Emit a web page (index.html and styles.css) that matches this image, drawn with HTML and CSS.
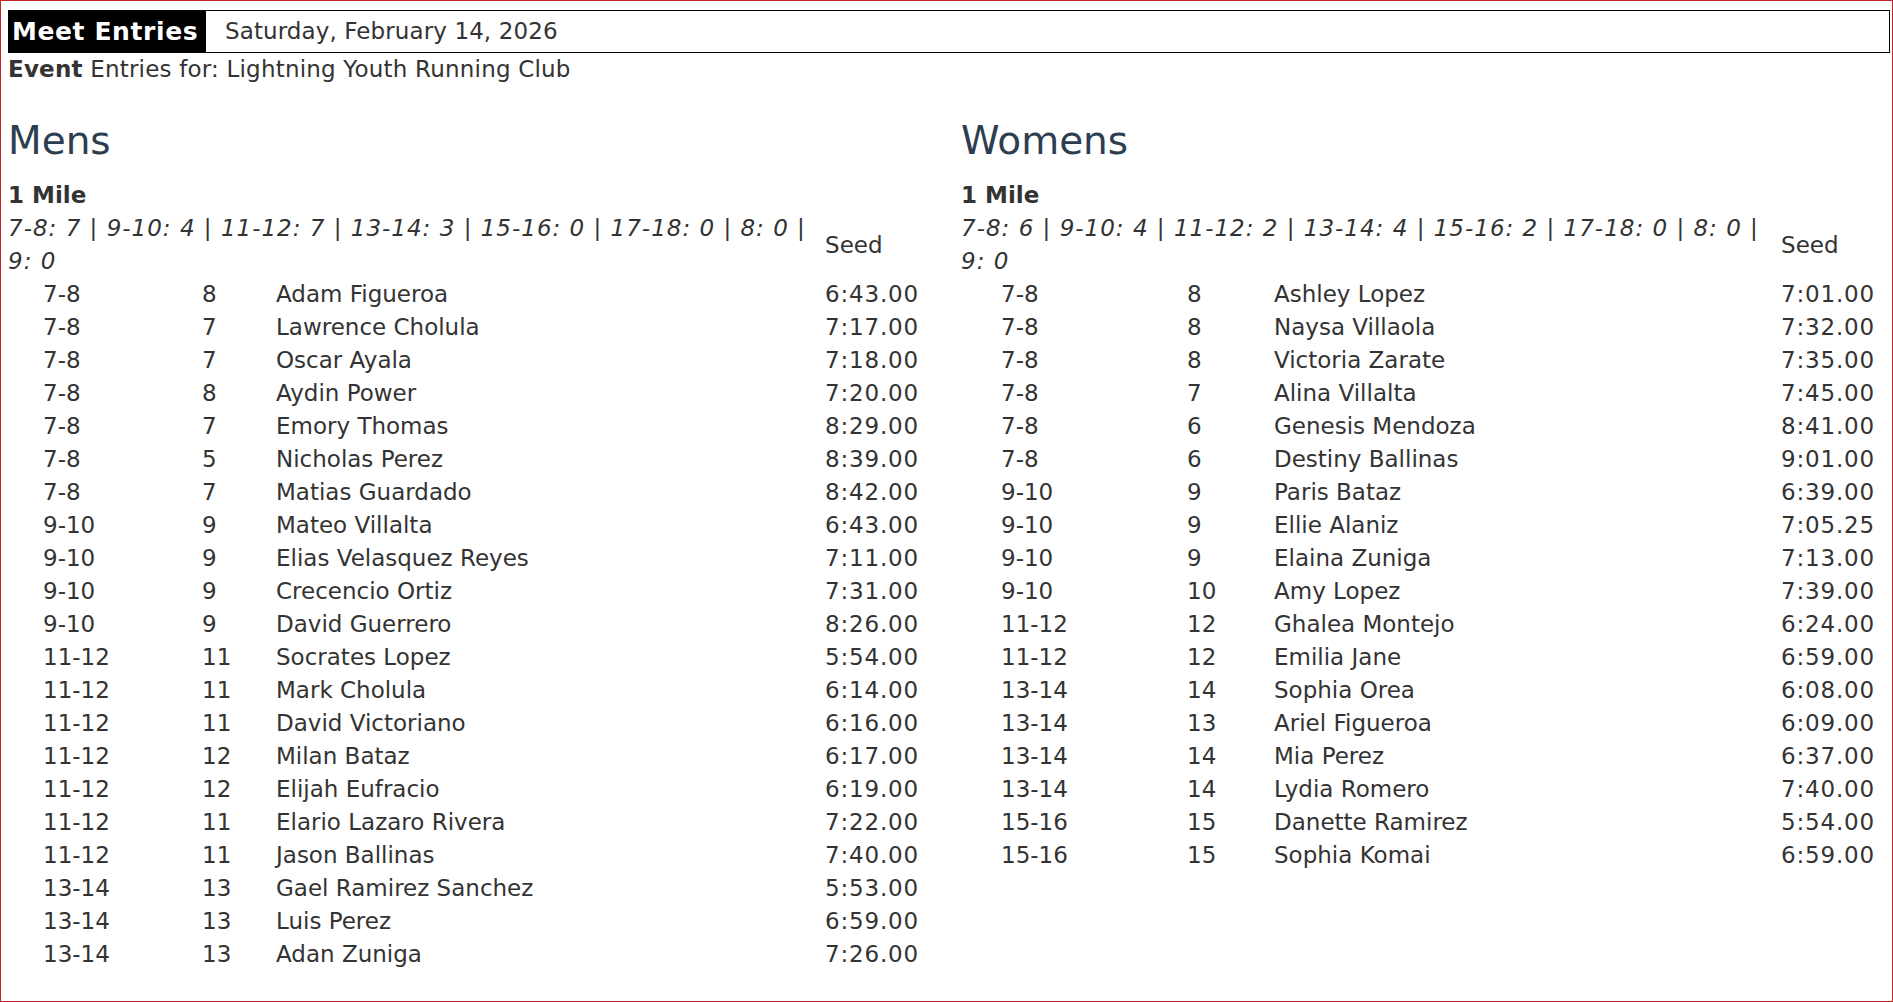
FILE: index.html
```html
<!DOCTYPE html>
<html>
<head>
<meta charset="utf-8">
<title>Meet Entries</title>
<link rel="stylesheet" href="styles.css">
</head>
<body>
<div class="frame">
  <div class="titlebar">
    <div class="label">Meet Entries</div>
    <div class="date">Saturday, February 14, 2026</div>
  </div>
  <div class="club"><b>Event</b> Entries for: Lightning Youth Running Club</div>

  <div class="columns">
    <section class="side mens">
      <h3>Mens</h3>
      <div class="event">1 Mile</div>
      <table class="entries">
        <colgroup><col class="c1"><col class="c2"><col class="c3"><col class="c4"></colgroup>
        <thead>
          <tr>
            <th colspan="3" class="summary">7-8: 7 | 9-10: 4 | 11-12: 7 | 13-14: 3 | 15-16: 0 | 17-18: 0 | 8: 0 | 9: 0</th>
            <th class="seedh">Seed</th>
          </tr>
        </thead>
        <tbody>
          <tr><td>7-8</td><td>8</td><td>Adam Figueroa</td><td>6:43.00</td></tr>
          <tr><td>7-8</td><td>7</td><td>Lawrence Cholula</td><td>7:17.00</td></tr>
          <tr><td>7-8</td><td>7</td><td>Oscar Ayala</td><td>7:18.00</td></tr>
          <tr><td>7-8</td><td>8</td><td>Aydin Power</td><td>7:20.00</td></tr>
          <tr><td>7-8</td><td>7</td><td>Emory Thomas</td><td>8:29.00</td></tr>
          <tr><td>7-8</td><td>5</td><td>Nicholas Perez</td><td>8:39.00</td></tr>
          <tr><td>7-8</td><td>7</td><td>Matias Guardado</td><td>8:42.00</td></tr>
          <tr><td>9-10</td><td>9</td><td>Mateo Villalta</td><td>6:43.00</td></tr>
          <tr><td>9-10</td><td>9</td><td>Elias Velasquez Reyes</td><td>7:11.00</td></tr>
          <tr><td>9-10</td><td>9</td><td>Crecencio Ortiz</td><td>7:31.00</td></tr>
          <tr><td>9-10</td><td>9</td><td>David Guerrero</td><td>8:26.00</td></tr>
          <tr><td>11-12</td><td>11</td><td>Socrates Lopez</td><td>5:54.00</td></tr>
          <tr><td>11-12</td><td>11</td><td>Mark Cholula</td><td>6:14.00</td></tr>
          <tr><td>11-12</td><td>11</td><td>David Victoriano</td><td>6:16.00</td></tr>
          <tr><td>11-12</td><td>12</td><td>Milan Bataz</td><td>6:17.00</td></tr>
          <tr><td>11-12</td><td>12</td><td>Elijah Eufracio</td><td>6:19.00</td></tr>
          <tr><td>11-12</td><td>11</td><td>Elario Lazaro Rivera</td><td>7:22.00</td></tr>
          <tr><td>11-12</td><td>11</td><td>Jason Ballinas</td><td>7:40.00</td></tr>
          <tr><td>13-14</td><td>13</td><td>Gael Ramirez Sanchez</td><td>5:53.00</td></tr>
          <tr><td>13-14</td><td>13</td><td>Luis Perez</td><td>6:59.00</td></tr>
          <tr><td>13-14</td><td>13</td><td>Adan Zuniga</td><td>7:26.00</td></tr>
        </tbody>
      </table>
    </section>

    <section class="side womens">
      <h3>Womens</h3>
      <div class="event">1 Mile</div>
      <table class="entries">
        <colgroup><col class="c1"><col class="c2"><col class="c3"><col class="c4"></colgroup>
        <thead>
          <tr>
            <th colspan="3" class="summary">7-8: 6 | 9-10: 4 | 11-12: 2 | 13-14: 4 | 15-16: 2 | 17-18: 0 | 8: 0 | 9: 0</th>
            <th class="seedh">Seed</th>
          </tr>
        </thead>
        <tbody>
          <tr><td>7-8</td><td>8</td><td>Ashley Lopez</td><td>7:01.00</td></tr>
          <tr><td>7-8</td><td>8</td><td>Naysa Villaola</td><td>7:32.00</td></tr>
          <tr><td>7-8</td><td>8</td><td>Victoria Zarate</td><td>7:35.00</td></tr>
          <tr><td>7-8</td><td>7</td><td>Alina Villalta</td><td>7:45.00</td></tr>
          <tr><td>7-8</td><td>6</td><td>Genesis Mendoza</td><td>8:41.00</td></tr>
          <tr><td>7-8</td><td>6</td><td>Destiny Ballinas</td><td>9:01.00</td></tr>
          <tr><td>9-10</td><td>9</td><td>Paris Bataz</td><td>6:39.00</td></tr>
          <tr><td>9-10</td><td>9</td><td>Ellie Alaniz</td><td>7:05.25</td></tr>
          <tr><td>9-10</td><td>9</td><td>Elaina Zuniga</td><td>7:13.00</td></tr>
          <tr><td>9-10</td><td>10</td><td>Amy Lopez</td><td>7:39.00</td></tr>
          <tr><td>11-12</td><td>12</td><td>Ghalea Montejo</td><td>6:24.00</td></tr>
          <tr><td>11-12</td><td>12</td><td>Emilia Jane</td><td>6:59.00</td></tr>
          <tr><td>13-14</td><td>14</td><td>Sophia Orea</td><td>6:08.00</td></tr>
          <tr><td>13-14</td><td>13</td><td>Ariel Figueroa</td><td>6:09.00</td></tr>
          <tr><td>13-14</td><td>14</td><td>Mia Perez</td><td>6:37.00</td></tr>
          <tr><td>13-14</td><td>14</td><td>Lydia Romero</td><td>7:40.00</td></tr>
          <tr><td>15-16</td><td>15</td><td>Danette Ramirez</td><td>5:54.00</td></tr>
          <tr><td>15-16</td><td>15</td><td>Sophia Komai</td><td>6:59.00</td></tr>
        </tbody>
      </table>
    </section>
  </div>
</div>
</body>
</html>
```
FILE: styles.css
```css
html, body {
  margin: 0;
  padding: 0;
  background: #fff;
}

body {
  font-family: "DejaVu Sans", Verdana, sans-serif;
  font-size: 23px;
  line-height: 33px;
  color: #333;
}

.frame {
  box-sizing: border-box;
  min-height: 100vh;
  border: 1px solid #c3262b;
  padding: 9px 2px 0 7px;
}

.titlebar {
  display: flex;
  align-items: stretch;
  height: 43px;
  box-sizing: border-box;
  border: 1px solid #000;
}

.label {
  background: #000;
  color: #fff;
  font-weight: bold;
  font-size: 25px;
  letter-spacing: 0.6px;
  line-height: 41px;
  padding: 0 8px 0 3px;
  width: 186px;
  white-space: nowrap;
}

.date {
  line-height: 41px;
  padding-left: 19px;
  letter-spacing: 0.1px;
}

.club {
  letter-spacing: 0.2px;
}

.club b {
  font-weight: bold;
}

.columns {
  display: grid;
  grid-template-columns: 953px 1fr;
}

h3 {
  margin: 34px 0 17px;
  font-size: 39px;
  line-height: 42px;
  font-weight: normal;
  color: #2c3e50;
}

.event {
  font-weight: bold;
}

.entries {
  width: 100%;
  table-layout: fixed;
  border-collapse: collapse;
  border-spacing: 0;
}

.entries th,
.entries td {
  padding: 0;
  text-align: left;
  vertical-align: middle;
  white-space: nowrap;
  font-weight: normal;
}

.entries th.summary {
  white-space: normal;
  font-style: italic;
  letter-spacing: 1px;
}

.entries td:last-child {
  letter-spacing: 0.8px;
}

.mens .c1 { width: 194px; }
.mens .c2 { width: 74px; }
.mens .c3 { width: 549px; }
.mens td:first-child { padding-left: 35px; }

.womens .c1 { width: 226px; }
.womens .c2 { width: 87px; }
.womens .c3 { width: 507px; }
.womens td:first-child { padding-left: 40px; }
```
